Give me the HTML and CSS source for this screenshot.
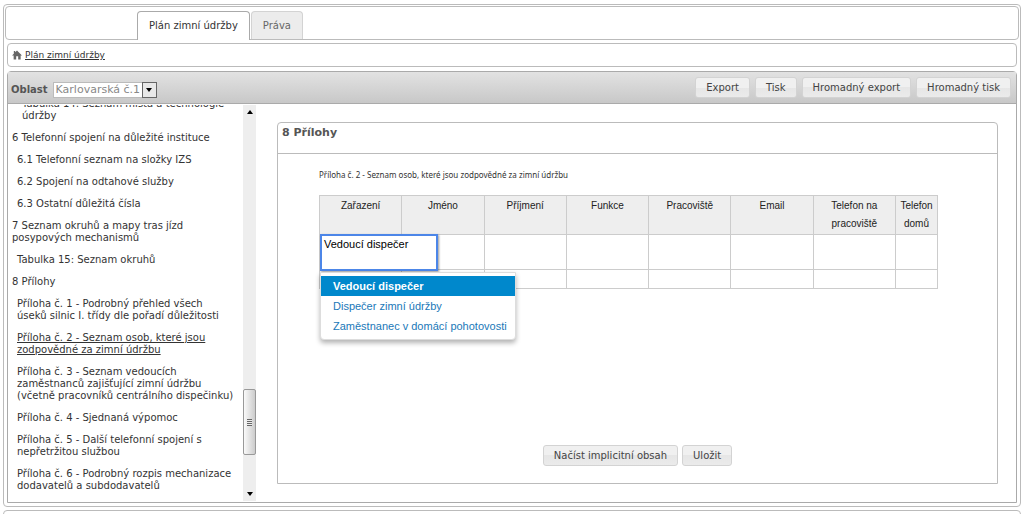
FILE: index.html
```html
<!DOCTYPE html>
<html lang="cs">
<head>
<meta charset="utf-8">
<title>Plán zimní údržby</title>
<link rel="stylesheet" href="styles.css">
</head>
<body>
<div class="shell">
  <nav class="tabs">
    <a class="tab tab-active" href="#plan">Plán zimní údržby</a>
    <a class="tab" href="#prava">Práva</a>
  </nav>
  <div class="inner">
    <div class="crumbs">
      <svg class="home" viewBox="0 0 11 11" aria-hidden="true"><path d="M5.500 0.500L11 6H9.500V10.500H6.800V7H4.600V10.500H1.800V6H0L2 4V1.200H3.500V2.500Z"/></svg>
      <a href="#plan">Plán zimní údržby</a>
    </div>
    <main class="main">
      <header class="toolbar">
        <label class="area-label" for="area">Oblast</label>
        <div class="select-box">
          <select id="area"><option>Karlovarská č.1</option></select>
          <span class="select-arrow"></span>
        </div>
        <div class="actions">
          <button class="btn" type="button">Export</button>
          <button class="btn" type="button">Tisk</button>
          <button class="btn" type="button">Hromadný export</button>
          <button class="btn" type="button">Hromadný tisk</button>
        </div>
      </header>
      <div class="content">
        <aside class="side">
          <nav class="toc">
            <a class="deep" href="#t14">Tabulka 14: Seznam místa a technologie údržby</a>
            <a href="#k6">6 Telefonní spojení na důležité instituce</a>
            <a class="sub" href="#k61">6.1 Telefonní seznam na složky IZS</a>
            <a class="sub" href="#k62">6.2 Spojení na odtahové služby</a>
            <a class="sub" href="#k63">6.3 Ostatní důležitá čísla</a>
            <a href="#k7">7 Seznam okruhů a mapy tras jízd posypových mechanismů</a>
            <a class="sub" href="#t15">Tabulka 15: Seznam okruhů</a>
            <a href="#k8">8 Přílohy</a>
            <a class="sub" href="#p1">Příloha č. 1 - Podrobný přehled všech úseků silnic I. třídy dle pořadí důležitosti</a>
            <a class="sub current" href="#p2">Příloha č. 2 - Seznam osob, které jsou zodpovědné za zimní údržbu</a>
            <a class="sub" href="#p3">Příloha č. 3 - Seznam vedoucích zaměstnanců zajišťující zimní údržbu (včetně pracovníků centrálního dispečinku)</a>
            <a class="sub" href="#p4">Příloha č. 4 - Sjednaná výpomoc</a>
            <a class="sub" href="#p5">Příloha č. 5 - Další telefonní spojení s nepřetržitou službou</a>
            <a class="sub" href="#p6">Příloha č. 6 - Podrobný rozpis mechanizace dodavatelů a subdodavatelů</a>
          </nav>
          <div class="scroll" aria-hidden="true">
            <span class="up"></span>
            <span class="thumb"><i></i></span>
            <span class="down"></span>
          </div>
        </aside>
        <section class="panel">
          <h2>8 Přílohy</h2>
          <div class="panel-body">
            <p class="caption">Příloha č. 2 - Seznam osob, které jsou zodpovědné za zimní údržbu</p>
            <table class="grid">
              <thead>
                <tr><th>Zařazení</th><th>Jméno</th><th>Příjmení</th><th>Funkce</th><th>Pracoviště</th><th>Email</th><th>Telefon na pracoviště</th><th class="narrow">Telefon domů</th></tr>
              </thead>
              <tbody>
                <tr class="tall">
                  <td>
                    <div class="editor">
                      <textarea aria-label="Zařazení">Vedoucí dispečer</textarea>
                      <ul class="menu">
                        <li><button class="picked" type="button">Vedoucí dispečer</button></li>
                        <li><button type="button">Dispečer zimní údržby</button></li>
                        <li><button type="button">Zaměstnanec v domácí pohotovosti</button></li>
                      </ul>
                    </div>
                  </td><td></td><td></td><td></td><td></td><td></td><td></td><td></td>
                </tr>
                <tr><td></td><td></td><td></td><td></td><td></td><td></td><td></td><td></td></tr>
              </tbody>
            </table>
          </div>
          <footer class="panel-actions">
            <button class="btn" type="button">Načíst implicitní obsah</button>
            <button class="btn" type="button">Uložit</button>
          </footer>
        </section>
      </div>
    </main>
  </div>
</div>
<div class="shell next"></div>
</body>
</html>
```
FILE: styles.css
```css
* { box-sizing: border-box; }
html { height: 100%; overflow: hidden; }
body {
  margin: 0;
  padding: 4px 2px 0 3px;
  height: 100%;
  overflow: hidden;
  background: #fff;
  color: #333;
  font: 10px/12px "DejaVu Sans", sans-serif;
}
a { color: inherit; text-decoration: none; }
.shell { border: 1px solid #bbb; border-radius: 4px; padding: 1px; }
.next { margin-top: 3px; height: 24px; }

.tabs {
  display: flex;
  align-items: flex-end;
  gap: 1px;
  height: 34px;
  padding-left: 131px;
  border: 1px solid #bbb;
  border-radius: 4px;
}
.tab {
  height: 28px;
  padding: 0 11px;
  border: 1px solid #d3d3d3;
  border-bottom: 0;
  border-radius: 4px 4px 0 0;
  background: #ececec;
  color: #666;
  font: 10px/28px "DejaVu Sans", sans-serif;
}
.tab-active { background: #fff; border-color: #aaa; color: #333; margin-bottom: -1px; height: 29px; }

.inner { padding: 3px 2px 2px; }
.crumbs {
  display: flex;
  align-items: center;
  gap: 3px;
  height: 24px;
  padding-left: 4px;
  border: 1px solid #bbb;
  border-radius: 4px;
  font-size: 9px;
}
.crumbs a { text-decoration: underline; }
.home { width: 10px; height: 10px; fill: #666; }

.main { margin-top: 4px; border: 1px solid #aaa; border-radius: 4px 4px 0 0; }
.toolbar {
  display: flex;
  align-items: center;
  height: 32px;
  padding: 0 5px 0 3px;
  border-bottom: 1px solid #aaa;
  background: linear-gradient(#e2e2e2, #c8c8c8);
}
.area-label { color: #555; font: bold 10px/16px "DejaVu Sans", sans-serif; padding-top: 4px; }
.select-box { position: relative; margin: 4px 0 0 5px; }
.select-box select {
  appearance: none;
  display: block;
  width: 104px;
  height: 16px;
  padding: 0 14px 0 2px;
  border: 1px solid #bbb;
  border-radius: 0;
  background: #fff;
  color: #888;
  font: 11px/14px "DejaVu Sans", sans-serif;
}
.select-arrow {
  position: absolute;
  top: 0;
  right: 0;
  display: grid;
  place-items: center;
  width: 15px;
  height: 16px;
  border: 1px solid #666;
  background: #e8e8e8;
  pointer-events: none;
}
.select-arrow::before, .up::before, .down::before {
  content: "";
  border: 3px solid transparent;
  border-top: 4px solid #000;
  border-bottom: 0;
}
.actions { display: flex; gap: 5px; margin-left: auto; }
.btn {
  height: 21px;
  padding: 0 10px;
  border: 1px solid #d3d3d3;
  border-radius: 3px;
  background: linear-gradient(#f0f0f0 50%, #e6e6e6 50%, #ebebeb);
  color: #444;
  font: 10px/18px "DejaVu Sans", sans-serif;
}

.content { display: flex; align-items: flex-start; padding: 1px 18px 1px 0; }
.side { display: flex; flex: none; width: 248px; height: 396px; overflow: hidden; }
.toc {
  display: flex;
  flex: 1;
  flex-direction: column;
  justify-content: flex-end;
  gap: 10px;
  padding: 0 8px 9px 4px;
}
.toc .sub { padding-left: 5px; }
.toc .deep { padding-left: 10px; }
.toc .current { text-decoration: underline; }
.scroll {
  display: flex;
  flex-direction: column;
  flex: none;
  width: 13px;
  background: #eee;
}
.up, .down { display: grid; place-items: center; height: 14px; }
.up::before { transform: rotate(180deg); }
.thumb {
  display: grid;
  place-items: center;
  height: 66px;
  margin: auto 0 32px;
  border: 1px solid #999;
  border-radius: 2px;
  background: linear-gradient(90deg, #fafafa, #ccc);
}
.thumb i { width: 5px; height: 7px; background: repeating-linear-gradient(#666 0 1px, #eee 1px 2px); }

.panel {
  display: flex;
  flex: 1;
  flex-direction: column;
  min-width: 0;
  min-height: 362px;
  margin: 17px 0 0 21px;
  border: 1px solid #bbb;
  border-radius: 4px 4px 0 0;
}
.panel h2 {
  height: 31px;
  margin: 0;
  padding: 2px 4px;
  border-bottom: 1px solid #bbb;
  color: #555;
  font: bold 11px/16px "DejaVu Sans", sans-serif;
}
.panel-body { flex: 1; padding: 15px 41px 0; }
.caption { margin: 0 0 14px; font: 8px/12px "Noto Sans", sans-serif; }
.grid {
  width: 619px;
  border-collapse: collapse;
  table-layout: fixed;
  color: #222;
  font: 10px/18px "Liberation Sans", sans-serif;
}
.grid th, .grid td { border: 1px solid #ccc; padding: 0; vertical-align: top; }
.grid th { height: 39px; padding: 1px 8px; background: #eee; font-weight: normal; }
.grid th.narrow { width: 42px; padding: 1px 0; }
.grid td { height: 19px; }
.grid .tall td { height: 35px; }
.editor { position: relative; }
.editor textarea {
  position: absolute;
  top: -1px;
  left: 0;
  z-index: 1;
  width: 118px;
  height: 37px;
  padding: 0 2px;
  border: 2px solid #4c86e8;
  background: #fff;
  color: #000;
  font: 11px/16px "Liberation Sans", sans-serif;
  resize: none;
  overflow: hidden;
  box-shadow: 1px 1px 2px rgba(0, 0, 0, .4);
}
.menu {
  position: absolute;
  top: 37px;
  left: 0;
  z-index: 2;
  width: 196px;
  margin: 0;
  padding: 3px 0;
  border: 1px solid #ddd;
  border-radius: 0 0 4px 4px;
  background: #fff;
  box-shadow: 0 3px 5px rgba(0, 0, 0, .3);
  list-style: none;
}
.menu button {
  display: block;
  width: 100%;
  height: 20px;
  padding: 0 12px;
  border: 0;
  background: none;
  color: #1a78b8;
  font: 11px/18px "Liberation Sans", sans-serif;
  text-align: left;
  white-space: nowrap;
}
.menu .picked { background: #0088cc; color: #fff; font-weight: bold; }
.panel-actions { display: flex; justify-content: center; gap: 4px; padding-bottom: 17px; }
```
